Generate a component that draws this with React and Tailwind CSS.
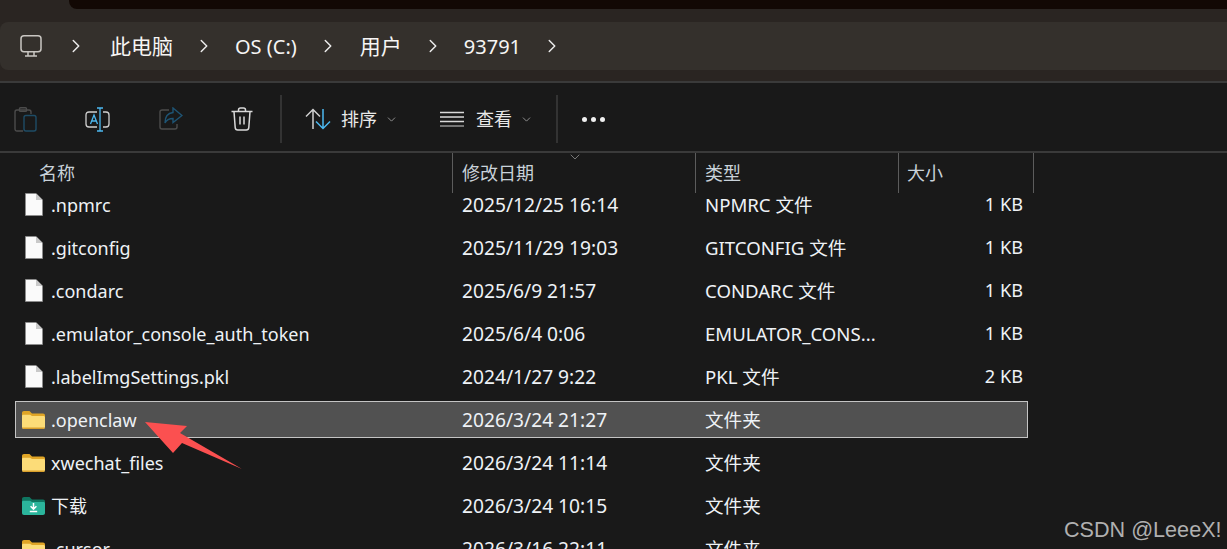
import React from 'react';
import { ChevronRight, ChevronDown } from 'lucide-react';

const crumbs = [
    { label: '此电脑', className: 'ml-[23px] text-[21px]' },
    { label: 'OS (C:)', className: 'ml-[20px]' },
    { label: '用户', className: 'ml-[21px] text-[21px]' },
    { label: '93791', className: 'ml-[20px]' },
];

const files = [
    { name: '.npmrc', date: '2025/12/25 16:14', type: 'NPMRC 文件', size: '1 KB', icon: 'file' },
    { name: '.gitconfig', date: '2025/11/29 19:03', type: 'GITCONFIG 文件', size: '1 KB', icon: 'file' },
    { name: '.condarc', date: '2025/6/9 21:57', type: 'CONDARC 文件', size: '1 KB', icon: 'file' },
    { name: '.emulator_console_auth_token', date: '2025/6/4 0:06', type: 'EMULATOR_CONS...', size: '1 KB', icon: 'file' },
    { name: '.labelImgSettings.pkl', date: '2024/1/27 9:22', type: 'PKL 文件', size: '2 KB', icon: 'file' },
    { name: '.openclaw', date: '2026/3/24 21:27', type: '文件夹', size: '', icon: 'folder', selected: true },
    { name: 'xwechat_files', date: '2026/3/24 11:14', type: '文件夹', size: '', icon: 'folder' },
    { name: '下载', date: '2026/3/24 10:15', type: '文件夹', size: '', icon: 'download' },
    { name: '.cursor', date: '2026/3/16 22:11', type: '文件夹', size: '', icon: 'folder' },
];

const FileIcon = () => (
    <svg width="18" height="23" viewBox="0 0 18 23" className="shrink-0">
        <path d="M0.5 0.5H11L17.5 7V22.5H0.5Z" fill="#fafafa" stroke="#8d8d8d" strokeWidth="0.8" />
        <path d="M11 0.5V7H17.5Z" fill="#c9c9c9" />
    </svg>
);

const FolderIcon = () => (
    <svg width="23" height="18" viewBox="0 0 23 18" className="shrink-0">
        <path d="M0 2C0 .8.8 0 2 0H7.5L10 2.5H21C22.2 2.5 23 3.3 23 4.5V8H0Z" fill="#e0a526" />
        <path d="M0 5C0 4.2.7 3.8 1.5 3.8H8L10 5H21.5C22.4 5 23 5.6 23 6.5V16C23 17.2 22.2 18 21 18H2C.8 18 0 17.2 0 16Z" fill="#fcdc78" />
        <path d="M0 16.6H23V16C23 17.2 22.2 18 21 18H2C.8 18 0 17.2 0 16Z" fill="#d99f2b" />
    </svg>
);

const DownloadsIcon = () => (
    <svg width="23" height="18" viewBox="0 0 23 18" className="shrink-0">
        <path d="M0 2C0 .8.8 0 2 0H7.5L10 2.5H21C22.2 2.5 23 3.3 23 4.5V8H0Z" fill="#0f7560" />
        <path d="M0 5C0 4.2.7 3.8 1.5 3.8H8L10 5H21.5C22.4 5 23 5.6 23 6.5V16C23 17.2 22.2 18 21 18H2C.8 18 0 17.2 0 16Z" fill="#2bb59c" />
        <path d="M11.5 6V11.8M8.6 9.2L11.5 12.2L14.4 9.2M7.8 14.6H15.2" stroke="#fff" strokeWidth="1.5" fill="none" />
    </svg>
);

const PcIcon = () => (
    <svg width="22" height="22" viewBox="0 0 22 22" fill="none" stroke="#c9c6c2" strokeWidth="1.5" className="shrink-0">
        <rect x="1" y="0.8" width="20" height="16" rx="3" />
        <path d="M8 17V20.5M14 17V20.5M5 21H17" />
    </svg>
);

const PasteIcon = () => (
    <svg width="23" height="25" viewBox="0 0 23 25" fill="none" strokeWidth="1.4" className="shrink-0">
        <path d="M9 24H3C1.8 24 1 23.2 1 22V5C1 3.8 1.8 3 3 3H15C16.2 3 17 3.8 17 5V7" stroke="#4c4c4c" />
        <rect x="5.5" y="0.8" width="7" height="3.6" rx="1" stroke="#4c4c4c" />
        <rect x="10" y="8.5" width="12" height="15.5" rx="2" stroke="#1e4c66" />
    </svg>
);

const RenameIcon = () => (
    <svg width="25" height="25" viewBox="0 0 25 25" fill="none" strokeWidth="1.3" className="shrink-0">
        <path d="M12 5H4C2 5 1 6 1 8V17C1 19 2 20 4 20H12M18 5H21C23 5 24 6 24 8V17C24 19 23 20 21 20H18" stroke="#d0d0d0" />
        <path d="M15 1V24M12 1H18M12 24H18" stroke="#4cb8f0" />
        <path d="M5.5 17L9 8L12.5 17M6.8 14H11.2" stroke="#4cb8f0" />
    </svg>
);

const ShareIcon = () => (
    <svg width="24" height="24" viewBox="0 0 24 24" fill="none" strokeWidth="1.4" className="shrink-0">
        <path d="M10 3H3C1.8 3 1 3.8 1 5V20C1 21.2 1.8 22 3 22H16C17.2 22 18 21.2 18 20V17" stroke="#4c4c4c" />
        <path d="M14 1L23 8.5L14 15.5V11.5C10 11.5 7.5 13 6 16C6 10 9 6 14 5.5Z" stroke="#1e5474" />
    </svg>
);

const TrashIcon = () => (
    <svg width="22" height="24" viewBox="0 0 22 24" fill="none" stroke="#d9d9d9" strokeWidth="1.5" className="shrink-0">
        <path d="M0.5 4.5H21.5M7.5 4.5V3C7.5 1.7 8.3 1 9.5 1H12.5C13.7 1 14.5 1.7 14.5 3V4.5" />
        <path d="M3 4.5L4.2 20.5C4.3 22 5.3 23 6.7 23H15.3C16.7 23 17.7 22 17.8 20.5L19 4.5" />
        <path d="M9 9.5V17.5M13 9.5V17.5" />
    </svg>
);

const SortIcon = () => (
    <svg width="26" height="22" viewBox="0 0 26 22" fill="none" strokeWidth="1.5" className="shrink-0">
        <path d="M8 21V1.5M1 8.5L8 1.5L15 8.5" stroke="#d0d0d0" />
        <path d="M18 1V20.5M11 13.5L18 20.5L25 13.5" stroke="#4cb8f0" />
    </svg>
);

const ViewIcon = () => (
    <svg width="24" height="16" viewBox="0 0 24 16" fill="none" strokeWidth="1.3" className="shrink-0">
        <path d="M0 1.5H24M0 6H24M0 10.5H24" stroke="#d9d9d9" />
        <path d="M0 15H24" stroke="#a8a8a8" />
    </svg>
);

const rowIcons = {
    file: (
        <span className="flex w-[23px] justify-center">
            <FileIcon />
        </span>
    ),
    folder: <FolderIcon />,
    download: <DownloadsIcon />,
};

function FileRow({ file }) {
    return (
        <div
            className={`mb-[6px] grid h-[37px] w-[1013px] shrink-0 grid-cols-[437px_243px_203px_130px] items-center text-[#eef2f6] ${
                file.selected ? 'border border-[#c4c4c4] bg-[#515151]' : 'border border-transparent'
            }`}
        >
            <div className="flex items-center gap-[6px] pl-[6px]">
                {rowIcons[file.icon]}
                <span className="mt-[2px] text-[18px] whitespace-nowrap">{file.name}</span>
            </div>
            <span className="mt-[2px] pl-[9px] text-[19.2px] whitespace-nowrap">{file.date}</span>
            <span className="pl-[9px] text-[18.6px] whitespace-nowrap">{file.type}</span>
            <span className="pr-[6px] text-right text-[18.2px] whitespace-nowrap">{file.size}</span>
        </div>
    );
}

export default function App() {
    return (
        <div className="relative flex h-[549px] w-[1227px] flex-col overflow-hidden bg-[#191919] font-['Noto_Sans','Noto_Sans_CJK_SC',sans-serif]">
            {/* what is left of the window above, and the address bar */}
            <div className="flex h-[81px] shrink-0 flex-col bg-[#2a2522]">
                <div className="ml-[69px] h-[9px] shrink-0 rounded-bl-lg bg-[#120804]" />
                <div className="mt-[13px] flex h-[48px] items-center rounded-l-lg bg-[#34302c] pl-[20px] text-[20px] text-[#f6f5f4]">
                    <PcIcon />
                    <ChevronRight size={22} strokeWidth={1.6} className="ml-[23px] text-[#ececec]" />
                    {crumbs.map((crumb) => (
                        <React.Fragment key={crumb.label}>
                            <span className={`${crumb.className} mt-[2px] whitespace-nowrap`}>{crumb.label}</span>
                            <ChevronRight size={22} strokeWidth={1.6} className="ml-[20px] text-[#ececec]" />
                        </React.Fragment>
                    ))}
                </div>
            </div>

            {/* toolbar */}
            <div className="flex h-[72px] shrink-0 items-center border-y-2 border-[#3a3a3a] pt-[4px] pl-[14px] text-[18px] text-[#e8e8e8]">
                <PasteIcon />
                <span className="ml-[48px]"><RenameIcon /></span>
                <span className="ml-[49px]"><ShareIcon /></span>
                <span className="ml-[48px]"><TrashIcon /></span>
                <div className="ml-[27px] h-[48px] w-[2px] bg-[#333333]" />
                <span className="ml-[23px]"><SortIcon /></span>
                <span className="ml-[10px]">排序</span>
                <ChevronDown size={13} strokeWidth={1.5} className="ml-[8px] text-[#a8a8a8]" />
                <span className="ml-[42px]"><ViewIcon /></span>
                <span className="ml-[12px]">查看</span>
                <ChevronDown size={13} strokeWidth={1.5} className="ml-[8px] text-[#a8a8a8]" />
                <div className="ml-[23px] h-[48px] w-[2px] bg-[#333333]" />
                <div className="ml-[24px] flex gap-[4px]">
                    <span className="size-[5px] rounded-full bg-[#f0f0f0]" />
                    <span className="size-[5px] rounded-full bg-[#f0f0f0]" />
                    <span className="size-[5px] rounded-full bg-[#f0f0f0]" />
                </div>
            </div>

            {/* column headers */}
            <div className="flex h-[40px] shrink-0 items-center text-[18px] text-[#c9d2da]">
                <div className="w-[452px] pl-[39px]">名称</div>
                <div className="relative flex h-full w-[243px] items-center border-l border-[#5c5c5c] pl-[9px]">
                    修改日期
                    <ChevronDown size={16} strokeWidth={1} className="absolute top-[-4px] left-[114px] text-[#a8a8a8]" />
                </div>
                <div className="flex h-full w-[203px] items-center border-l border-[#5c5c5c] pl-[9px]">类型</div>
                <div className="flex h-full w-[136px] items-center border-x border-[#5c5c5c] pl-[8px]">大小</div>
            </div>

            {/* file list, scrolled a little under the header */}
            <div className="min-h-0 flex-1 overflow-hidden">
                <div className="mt-[-7px] ml-[15px] flex flex-col">
                    {files.map((file) => (
                        <FileRow key={file.name} file={file} />
                    ))}
                </div>
            </div>

            {/* red annotation arrow */}
            <svg width="110" height="60" viewBox="0 0 110 60" className="absolute top-[415px] left-[140px]">
                <path d="M5 7L47 11L40 18L102 54L42 28L33 38Z" fill="#fb5050" />
            </svg>

            <span className="absolute top-[514px] left-[1064px] font-['Liberation_Sans',sans-serif] text-[21.6px] whitespace-nowrap text-[#b0b0b0]">
                CSDN @LeeeX!
            </span>
        </div>
    );
}
